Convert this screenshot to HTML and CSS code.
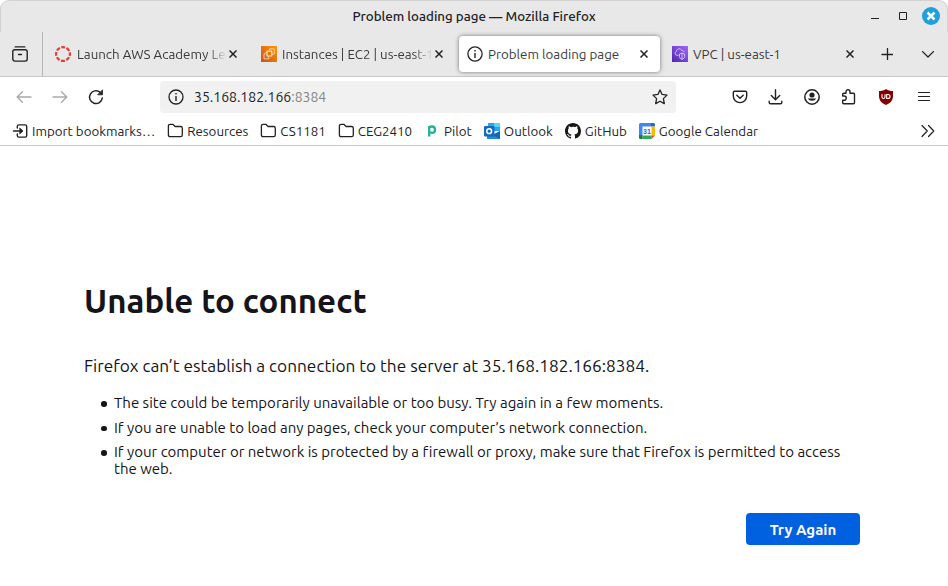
FILE: index.html
```html
<!DOCTYPE html>
<html lang="en">
<head>
<meta charset="utf-8">
<title>Problem loading page</title>
<link rel="stylesheet" href="styles.css">
</head>
<body>
<div class="window">
  <header class="titlebar">
    <div class="window-title">Problem loading page — Mozilla Firefox</div>
    <div class="window-controls">
      <svg class="minimize" width="8" height="16" viewBox="0 0 8 16"><path d="M0 10.500h8" stroke="#222" fill="none"/></svg>
      <svg class="maximize" width="8" height="16" viewBox="0 0 8 16"><path d="M.5 4.500h7v7h-7z" stroke="#222" fill="none"/></svg>
      <svg width="18" height="18" viewBox="0 0 18 18"><circle cx="9" cy="9" r="9" fill="#209fdf"/><path d="M5.500 5.500l7 7M12.500 5.500l-7 7" stroke="#fff" stroke-width="2.500"/></svg>
    </div>
  </header>

  <nav class="tabs">
    <div class="firefox-view">
      <svg width="16" height="16" viewBox="0 0 16 16" class="line"><path d="M3.200.9h9.600" stroke-width="1.400"/><rect x=".8" y="3.800" width="14.400" height="11.300" rx="2"/><path d="M6.500 8.500h3"/></svg>
    </div>
    <div class="tab tab-aws">
      <svg width="16" height="16" viewBox="0 0 16 16"><circle cx="8" cy="8" r="6.900" fill="none" stroke="#e23c35" stroke-width="2.200" stroke-dasharray="3.900 1.519" stroke-dashoffset="1.950"/></svg>
      <span class="tab-label fade">Launch AWS Academy Lea</span>
      <svg class="close" width="8" height="8" viewBox="0 0 8 8"><path d="M.5.500l7 7M7.500.500l-7 7"/></svg>
    </div>
    <div class="tab tab-ec2">
      <svg width="16" height="16" viewBox="0 0 16 16"><defs><linearGradient id="orange" x1="0" y1="1" x2="1" y2="0"><stop stop-color="#c8511b"/><stop offset="1" stop-color="#f90"/></linearGradient></defs><path fill="url(#orange)" d="M0 0h16v16H0z"/><g fill="none" stroke="#ffe6c9" stroke-width=".8"><rect x="6" y="5.200" width="4.800" height="4.800" rx=".6" stroke-width="1.200"/><path d="M8.500 4V2.900h4.800v5H12M4.800 7.800H3v5h5v-1.300M4.500 6.500H6M7.200 10v1.500M10.800 8.500H12"/></g></svg>
      <span class="tab-label fade">Instances | EC2 | us-east-1</span>
      <svg class="close" width="8" height="8" viewBox="0 0 8 8"><path d="M.5.500l7 7M7.500.500l-7 7"/></svg>
    </div>
    <div class="tab tab-active">
      <svg width="16" height="16" viewBox="0 0 16 16" class="line"><circle cx="8" cy="8" r="7.100" stroke-width="1.300"/><path d="M8 7v5M8 4v1.500" stroke-width="1.400" stroke-linecap="butt"/></svg>
      <span class="tab-label">Problem loading page</span>
      <svg class="close" width="8" height="8" viewBox="0 0 8 8"><path d="M.5.500l7 7M7.500.500l-7 7"/></svg>
    </div>
    <div class="tab tab-vpc">
      <svg width="16" height="16" viewBox="0 0 16 16"><defs><linearGradient id="purple" x1="0" y1="1" x2="1" y2="0"><stop stop-color="#4d27a8"/><stop offset="1" stop-color="#a166ff"/></linearGradient></defs><path fill="url(#purple)" d="M0 0h16v16H0z"/><g fill="none" stroke="#eadcff" stroke-width=".8"><path d="M6.500 9.300H4.800a2 2 0 0 1-.3-3.900C4.500 2.300 9 1.800 9.800 4.700c1.300-.5 2.300.3 2.400 1.500"/><path d="M7.500 8l2.500-1 2.600 1v2.600c0 1.300-1 2.100-2.600 2.800-1.500-.7-2.500-1.500-2.500-2.800zM10 7v6.400"/></g></svg>
      <span class="tab-label">VPC | us-east-1</span>
      <svg class="close" width="8" height="8" viewBox="0 0 8 8"><path d="M.5.500l7 7M7.500.500l-7 7"/></svg>
    </div>
    <svg class="new-tab line" width="12" height="12" viewBox="0 0 12 12"><path d="M6.500.500v11M1 6.500h11" stroke-width="1.300"/></svg>
    <svg class="all-tabs line" width="12" height="7" viewBox="0 0 12 7"><path d="M.6.600L6 6 11.400.600" stroke-width="1.300"/></svg>
  </nav>

  <div class="toolbar">
    <div class="nav-buttons">
      <svg class="line muted" width="16" height="16" viewBox="0 0 16 16"><path d="M15 8H1.200M6.500 2.700L1.200 8l5.300 5.300"/></svg>
      <svg class="line muted" width="16" height="16" viewBox="0 0 16 16"><path d="M1 8h13.800M9.500 2.700L14.800 8l-5.300 5.300"/></svg>
      <svg class="line" width="16" height="16" viewBox="0 0 16 16"><path d="M14.300 9A6.400 6.400 0 1 1 12 3.200" stroke-width="1.500"/><path d="M14.500 1.200v4.600H9.900z" fill="#222" stroke-width=".8"/></svg>
    </div>
    <div class="urlbar">
      <svg width="16" height="16" viewBox="0 0 16 16" class="line"><circle cx="8" cy="8" r="7" stroke-width="1.300"/><path d="M8 7v5M8 4v1.500" stroke-width="1.400" stroke-linecap="butt"/></svg>
      <span class="address">35.168.182.166<span class="port">:8384</span></span>
      <svg class="line" width="16" height="16" viewBox="0 0 16 16"><path d="M8 .9l2.100 4.500 4.900.7-3.600 3.500.9 5L8 12.200l-4.300 2.400.9-5L1 6.100l4.900-.7z" stroke-width="1.300"/></svg>
    </div>
    <div class="tools">
      <svg class="line" width="16" height="16" viewBox="0 0 16 16"><path d="M2.700 2.200h10.600q1.400 0 1.400 1.400v3.500a6.700 6.500 0 0 1-13.400 0V3.600q0-1.400 1.400-1.400z"/><path d="M4.800 6.300L8 9.300l3.200-3"/></svg>
      <svg class="line" width="16" height="16" viewBox="0 0 16 16"><path d="M7.500 .8v9.700M3.300 6.500l4.200 4.200 4.200-4.200M1.200 12.200v1.200q0 1.400 1.400 1.400h9.800q1.400 0 1.400-1.400v-1.200"/></svg>
      <svg class="line" width="16" height="16" viewBox="0 0 16 16"><circle cx="8" cy="8" r="7.200" stroke-width="1.500"/><circle cx="8" cy="6" r="2.600" fill="#222" stroke="none"/><path d="M3.700 9.400h8.600a4.700 4.100 0 0 1-8.600 0z" fill="#222" stroke="none"/></svg>
      <svg class="line" width="16" height="16" viewBox="0 0 16 16"><path d="M2.700 7V5.200q0-1 1-1H6V2.800a2 2 0 0 1 4 0v1.400h3.500q1 0 1 1v8.500q0 1-1 1H3.700q-1 0-1-1v-2.400h1.400a2 2 0 0 0 0-4.300H2.700z" stroke-width="1.400"/></svg>
      <svg class="shield" width="16" height="16" viewBox="0 0 16 16"><path d="M8 0c2 1.500 4.300 2 7 2v5c0 4.500-3 7.500-7 9-4-1.500-7-4.500-7-9V2c2.700 0 5-.5 7-2z" fill="#800000"/><path d="M4 5.300v2.600q0 1.600 1.500 1.600T7 7.900V5.300M8.700 5.500H10a2 2 0 0 1 0 4H8.700z" fill="none" stroke="#fff" stroke-width="1.100"/></svg>
      <svg class="line" width="16" height="16" viewBox="0 0 16 16"><path d="M2.500 3.500h11M2.500 7.500h11M2.500 11.500h11" stroke-width="1.200"/></svg>
    </div>
  </div>

  <div class="bookmarks">
    <div class="bookmark"><svg class="line" width="16" height="16" viewBox="0 0 16 16"><path d="M5.300 5V3.500q0-1.600 1.600-1.600h6.200q1.600 0 1.600 1.600v9q0 1.600-1.600 1.600H6.900q-1.600 0-1.600-1.600V11M1.500 8h8"/><path d="M8 5.300L11 8l-3 2.700z" fill="#222" stroke-width=".8"/></svg><span>Import bookmarks…</span></div>
    <div class="bookmark"><svg class="line" width="16" height="16" viewBox="-.6 0 16 16"><path d="M.8 12v-9q0-1.700 1.700-1.700h2.700l2.300 2.200h5.500q1.700 0 1.700 1.700V12q0 1.700-1.700 1.700H2.500Q.8 13.700.8 12z" stroke-width="1.300"/></svg><span>Resources</span></div>
    <div class="bookmark"><svg class="line" width="16" height="16" viewBox="-.6 0 16 16"><path d="M.8 12v-9q0-1.700 1.700-1.700h2.700l2.300 2.200h5.500q1.700 0 1.700 1.700V12q0 1.700-1.700 1.700H2.500Q.8 13.700.8 12z" stroke-width="1.300"/></svg><span>CS1181</span></div>
    <div class="bookmark"><svg class="line" width="16" height="16" viewBox="-.6 0 16 16"><path d="M.8 12v-9q0-1.700 1.700-1.700h2.700l2.300 2.200h5.500q1.700 0 1.700 1.700V12q0 1.700-1.700 1.700H2.500Q.8 13.700.8 12z" stroke-width="1.300"/></svg><span>CEG2410</span></div>
    <div class="bookmark"><svg width="16" height="16" viewBox="0 0 16 16"><path d="M5.200 13.500V3M5.200 4.500Q6 3.500 8 3.500q3 0 3 3.200t-3 3.200q-2 0-2.800-1.400" fill="none" stroke="#25b297" stroke-width="2.300"/></svg><span>Pilot</span></div>
    <div class="bookmark"><svg width="16" height="16" viewBox="0 0 16 16"><path d="M4 0h12v8H4z" fill="#28a8ea"/><path d="M10 0h6v4h-6z" fill="#50d9ff"/><path d="M4 4h6v4H4z" fill="#0364b8"/><path d="M3 8l7 4 6-4v8H3z" fill="#2489d8"/><path d="M16 8v8L8 12z" fill="#1268b3"/><rect y="3" width="10.500" height="10.500" rx="1" fill="#1769bc"/><circle cx="5.200" cy="8.200" r="2.400" fill="none" stroke="#fff" stroke-width="1.500"/></svg><span>Outlook</span></div>
    <div class="bookmark"><svg width="16" height="16" viewBox="0 0 16 16"><path fill="#181717" d="M8 0C3.580 0 0 3.580 0 8c0 3.540 2.290 6.530 5.470 7.590.4.070.55-.17.55-.38 0-.19-.01-.82-.01-1.490-2.010.37-2.530-.49-2.690-.94-.09-.23-.48-.94-.82-1.130-.28-.15-.68-.52-.01-.53.63-.01 1.080.58 1.230.82.72 1.210 1.870.87 2.330.66.070-.52.280-.87.510-1.070-1.780-.2-3.640-.89-3.640-3.950 0-.87.310-1.590.82-2.150-.08-.2-.36-1.020.08-2.120 0 0 .67-.21 2.200.82A7.650 7.650 0 0 1 8 3.870c.68 0 1.360.09 2 .26 1.530-1.040 2.200-.82 2.200-.82.44 1.100.16 1.920.08 2.120.51.560.82 1.270.82 2.150 0 3.070-1.870 3.750-3.650 3.950.29.250.54.730.54 1.480 0 1.070-.01 1.930-.01 2.200 0 .21.150.46.55.38A8.010 8.010 0 0 0 16 8c0-4.420-3.580-8-8-8z"/></svg><span>GitHub</span></div>
    <div class="bookmark"><svg width="16" height="16" viewBox="0 0 16 16"><path fill="#fff" d="M3 3h10v10H3z"/><path d="M0 12V1.500Q0 0 1.500 0H12v3.500H3.500V12z" fill="#4285f4"/><path d="M12 0h2.500Q16 0 16 1.500V3.500h-4z" fill="#1967d2"/><path d="M12.500 3.500H16v9h-3.500z" fill="#fbbc04"/><path d="M3.500 12.500h9V16h-9z" fill="#34a853"/><path d="M0 12h3.500v4h-2Q0 16 0 14.500z" fill="#188038"/><path d="M12.500 12.500H16L12.500 16z" fill="#ea4335"/><text x="8" y="10.700" text-anchor="middle" class="date">31</text></svg><span>Google Calendar</span></div>
    <svg class="overflow line" width="14" height="14" viewBox="0 0 14 14"><path d="M1 1.500L6.300 7 1 12.500M7.500 1.500L12.800 7l-5.300 5.500" stroke-width="1.200"/></svg>
  </div>

  <main class="error-page">
    <h1>Unable to connect</h1>
    <p>Firefox can’t establish a connection to the server at 35.168.182.166:8384.</p>
    <ul>
      <li>The site could be temporarily unavailable or too busy. Try again in a few moments.</li>
      <li>If you are unable to load any pages, check your computer’s network connection.</li>
      <li>If your computer or network is protected by a firewall or proxy, make sure that Firefox is permitted to access the web.</li>
    </ul>
    <button type="button">Try Again</button>
  </main>
</div>
</body>
</html>
```
FILE: styles.css
```css
* { box-sizing: border-box; }
body {
  margin: 0;
  background: #fff;
  color: #222226;
  font: 13.333px/16px Ubuntu, "Noto Sans", sans-serif;
}
svg { display: block; flex: none; }
.line { fill: none; stroke: #222; stroke-width: 1.4; stroke-linecap: round; stroke-linejoin: round; }
.muted { stroke: #aaa; }
.window { width: 948px; height: 586px; overflow: hidden; }

.titlebar {
  display: grid;
  grid-template-columns: 1fr auto;
  height: 32px;
  align-items: center;
  background: #e8e8e8;
  border: 1px solid #d2d2d2;
  border-bottom: 0;
  border-radius: 9px 9px 0 0;
}
.window-title { grid-area: 1 / 1 / 2 / 3; text-align: center; font-weight: 500; }
.window-controls { grid-area: 1 / 2; display: flex; align-items: center; padding: 0 7px 1px 0; }
.minimize { margin-right: 20px; }
.maximize { margin-right: 15px; }

.tabs { display: flex; align-items: center; height: 45px; background: #e8e8e8; border-bottom: 1px solid #c7c7c7; }
.firefox-view { width: 43px; height: 44px; padding: 14px 0 0 12px; border-right: 1px solid #b5b5b5; }
.tab { display: flex; align-items: center; height: 36px; padding: 0 12px 0 8px; }
.tab > svg:first-child { margin-right: 5px; }
.tab-label { flex: 1; min-width: 0; padding-top: 2px; white-space: nowrap; color: #3a3a3e; }
.tab-aws { width: 206px; padding-left: 12px; }
.tab-aws > svg:first-child { margin-right: 6px; }
.tab-ec2 { width: 206px; padding-left: 12px; }
.tab-active { width: 201px; margin-left: 4px; padding-left: 8px; border-radius: 4px; background: #fff; box-shadow: 0 0 4px rgba(0, 0, 0, .5); }
.tab-vpc { width: 206px; padding-left: 12px; }
.fade { -webkit-mask-image: linear-gradient(to left, transparent 2px, #000 22px); mask-image: linear-gradient(to left, transparent 2px, #000 22px); }
.tab-aws .fade { margin-right: -8px; -webkit-mask-image: linear-gradient(to left, transparent 10px, #000 30px); mask-image: linear-gradient(to left, transparent 10px, #000 30px); }
.close { stroke: #222; stroke-width: 1.500; fill: none; }
.new-tab { margin-left: 15px; }
.all-tabs { margin-left: 29px; }

.toolbar { display: flex; align-items: center; height: 40px; }
.nav-buttons { display: flex; gap: 20px; width: 160px; padding-left: 16px; }
.urlbar { display: flex; align-items: center; width: 516px; height: 32px; padding: 0 8px; border-radius: 4px; background: #f1f1f1; }
.address { flex: 1; padding-left: 10px; font-size: 14px; }
.port { color: #858585; }
.tools { display: flex; gap: 20px; padding-left: 56px; }
.shield { margin: 0 2px; }

.bookmarks { display: flex; align-items: center; height: 29px; padding-left: 12px; border-bottom: 1px solid #c8c8c8; }
.bookmark { display: flex; align-items: center; gap: 4px; margin-right: 12px; }
.bookmark span { padding-top: 2px; }
.date { font: bold 7px "Liberation Sans", sans-serif; fill: #1967d2; }
.overflow { margin-left: auto; margin-right: 13px; }

.error-page { padding: 135px 88px 0 84px; color: #15141a; font-variant-ligatures: none; }
h1 { margin: 0; font-size: 33px; line-height: 40px; font-weight: 600; letter-spacing: .05px; }
p { margin: 34px 0 0; font-size: 17.25px; line-height: 22px; }
ul { margin: 17px 0 0; padding-left: 30px; font-size: 15px; line-height: 17px; list-style: none; }
li { margin-bottom: 7.500px; }
li::before {
  content: "";
  display: inline-block;
  width: 5.500px;
  height: 5.500px;
  margin: 0 7.500px 0 -13px;
  border-radius: 50%;
  background: #15141a;
  vertical-align: 1.500px;
}
button {
  display: block;
  width: 114px;
  height: 32px;
  margin: 36px 0 0 auto;
  padding: 0;
  border: 0;
  border-radius: 4px;
  background: #0061e0;
  color: #fbfbfe;
  font: 600 15px/34px Ubuntu, "Noto Sans", sans-serif;
}
```
